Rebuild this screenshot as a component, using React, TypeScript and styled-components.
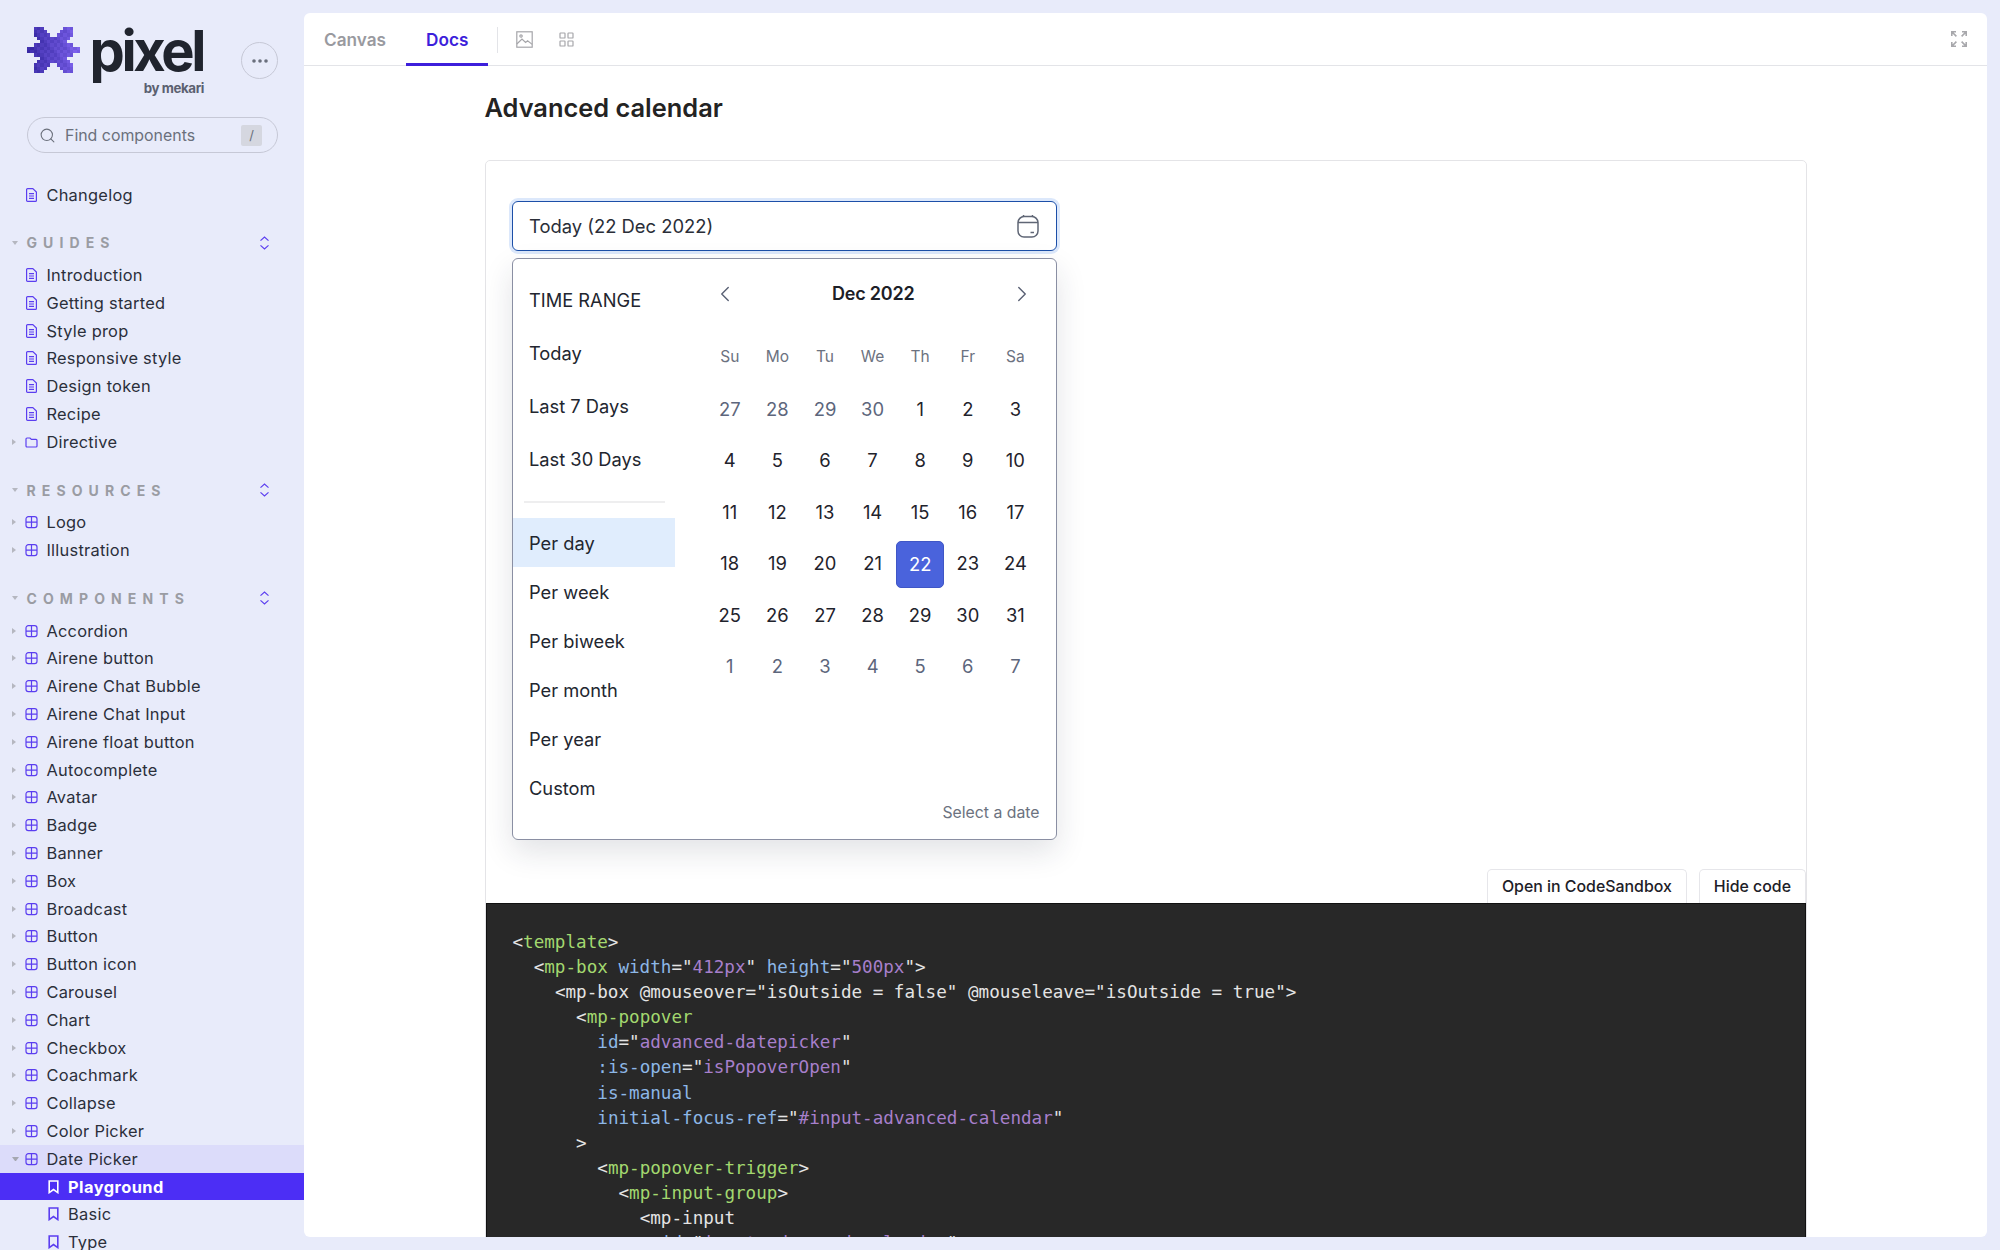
import React from "react";
import styled, { createGlobalStyle } from "styled-components";
import { ChevronLeft, ChevronRight, Search } from "lucide-react";

const GlobalStyle = createGlobalStyle`
  html, body {
    margin: 0;
    padding: 0;
    height: 100%;
    background: #e8ebfa;
    font-family: Inter, "Noto Sans", sans-serif;
    color: #232933;
  }
  * { box-sizing: border-box; }
`;

const Page = styled.div`
  display: flex;
  width: 2000px;
  height: 1250px;
  overflow: hidden;
  background: #e8ebfa;
`;

/* ---------- sidebar ---------- */

const Sidebar = styled.aside`
  width: 304px;
  flex: none;
  height: 1250px;
  overflow: hidden;
`;

const Brand = styled.div`
  display: flex;
  justify-content: space-between;
  height: 117px;
  padding: 26px 26px 0 27px;
`;

const LogoGroup = styled.div`
  display: flex;
  align-items: flex-start;
  gap: 10px;
`;

const Wordmark = styled.div`
  display: flex;
  flex-direction: column;
  align-items: flex-end;
  width: 114px;
`;

const WordmarkName = styled.span`
  font-size: 56px;
  line-height: 50px;
  font-weight: 700;
  letter-spacing: -3.4px;
  margin-right: 1px;
  color: #20242e;
`;

const WordmarkBy = styled.span`
  margin-top: 4px;
  font-size: 13.3px;
  line-height: 16px;
  font-weight: 700;
  letter-spacing: -0.4px;
  color: #5b6070;
`;

const MoreButton = styled.button`
  width: 37px;
  height: 37px;
  margin-top: 16px;
  padding: 0;
  display: flex;
  align-items: center;
  justify-content: center;
  background: transparent;
  border: 1px solid #c6c8d6;
  border-radius: 50%;
  color: #6a6f7d;
`;

const SearchBox = styled.div`
  display: flex;
  align-items: center;
  width: 251px;
  height: 36px;
  margin: 0 0 27.7px 27px;
  padding: 0 15px 0 11px;
  border: 1px solid #c6c8d6;
  border-radius: 18px;
  color: #6b707c;
  font-size: 15.9px;
`;

const SearchLabel = styled.span`
  flex: 1;
  margin-left: 9px;
`;

const SearchKey = styled.span`
  display: flex;
  align-items: center;
  justify-content: center;
  width: 21px;
  height: 21px;
  border-radius: 2px;
  background: #d5d7e0;
  font-size: 13px;
  color: #6b707c;
`;

const TreeRow = styled.div<{ $open?: boolean; $active?: boolean; $sub?: boolean }>`
  display: flex;
  align-items: center;
  height: 27.8px;
  padding-left: ${(p) => (p.$sub ? "48px" : "12px")};
  font-size: 16.4px;
  letter-spacing: ${(p) => (p.$active ? "0.45px" : "0.27px")};
  white-space: nowrap;
  color: ${(p) => (p.$active ? "#fff" : "#2b2f3a")};
  font-weight: ${(p) => (p.$active ? 700 : 400)};
  background: ${(p) => (p.$active ? "#4c2ef5" : p.$open ? "#dcdcfa" : "transparent")};
`;

const Caret = styled.span<{ $open?: boolean; $blank?: boolean }>`
  width: 13.4px;
  flex: none;
  height: 0;
  display: block;
  ${(p) =>
    p.$blank
      ? ""
      : p.$open
      ? `
    margin-right: 6.4px;
    border-left: 3.5px solid transparent;
    border-right: 3.5px solid transparent;
    border-top: 4px solid #a5a7b0;
    border-bottom: 0;
    width: 7px;
  `
      : `
    width: 0;
    margin-right: 9.4px;
    border-top: 3.5px solid transparent;
    border-bottom: 3.5px solid transparent;
    border-left: 4px solid #b5b7c0;
  `}
`;

const RowIcon = styled.svg`
  flex: none;
  width: 13px;
  height: 14px;
  margin-right: 8px;
`;

const SubIcon = styled.svg`
  flex: none;
  width: 11px;
  height: 14px;
  margin-right: 9px;
`;

const SectionTitle = styled.div`
  display: flex;
  align-items: center;
  height: 28px;
  margin: 20.4px 0 4.3px;
  padding: 0 34px 0 12px;
  font-size: 14px;
  font-weight: 700;
  letter-spacing: 6.1px;
  color: #9a9ca3;
`;

const SectionCaret = styled.span`
  width: 0;
  height: 0;
  margin-right: 8.5px;
  border-left: 3.5px solid transparent;
  border-right: 3.5px solid transparent;
  border-top: 4px solid #b5b7c0;
`;

const SectionName = styled.span`
  flex: 1;
`;

/* ---------- main card ---------- */

const Card = styled.main`
  display: flex;
  flex-direction: column;
  width: 1683px;
  height: 1224px;
  margin-top: 13px;
  background: #fff;
  border-radius: 6px;
  overflow: hidden;
`;

const TabBar = styled.header`
  display: flex;
  align-items: stretch;
  flex: none;
  height: 53px;
  border-bottom: 1px solid #e3e4e8;
`;

const Tab = styled.div<{ $active?: boolean }>`
  display: flex;
  align-items: center;
  padding: 3px 20px 0;
  font-size: 17.2px;
  font-weight: 600;
  color: ${(p) => (p.$active ? "#3d1fdb" : "#999a9f")};
  border-bottom: 3px solid ${(p) => (p.$active ? "#3d1fdb" : "transparent")};
  margin-bottom: -1px;
`;

const TabDivider = styled.span`
  width: 1px;
  height: 26px;
  margin: 14px 18px 0 9px;
  background: #e3e4e8;
`;

const TabIcon = styled.span`
  display: flex;
  align-items: center;
  margin-right: 26px;
`;

const TabSpacer = styled.span`
  flex: 1;
`;

const ExpandIcon = styled.span`
  display: flex;
  align-items: center;
  margin-right: 20px;
`;

const Docs = styled.div`
  padding: 26px 180px 0 180.5px;
`;

const Title = styled.h1`
  margin: 0 0 36px;
  font-size: 25.4px;
  line-height: 32px;
  font-weight: 600;
  color: #232323;
`;

const Panel = styled.section`
  border: 1px solid #e4e4e7;
  border-radius: 5px;
`;

const Preview = styled.div`
  height: 708px;
  padding: 40px 0 0 26px;
`;

const DateInput = styled.div`
  display: flex;
  align-items: center;
  justify-content: space-between;
  width: 545px;
  height: 50px;
  padding: 0 17px 0 16.5px;
  background: #fff;
  border: 1.5px solid #1c4fa8;
  border-radius: 6px;
  box-shadow: 0 0 0 3px #dce8fb;
  font-size: 18.4px;
  color: #2a2e38;
`;

const Popover = styled.div`
  display: flex;
  width: 545px;
  height: 582px;
  margin-top: 7px;
  background: #fff;
  border: 1px solid #8a8fa3;
  border-radius: 6px;
  box-shadow: 0 12px 30px rgba(30, 35, 60, 0.13);
`;

const Presets = styled.div`
  flex: none;
  width: 162px;
  padding-top: 14px;
`;

const RangeItem = styled.div`
  display: flex;
  align-items: center;
  height: 53px;
  padding-left: 16.5px;
  font-size: 18.3px;
  color: #22262f;
`;

const PresetDivider = styled.div`
  height: 2px;
  margin: 16px 10px 15px 11px;
  background: #eeeeef;
`;

const PeriodItem = styled.div<{ $active?: boolean }>`
  display: flex;
  align-items: center;
  height: 49px;
  padding-left: 16.5px;
  font-size: 18.3px;
  color: #22262f;
  background: ${(p) => (p.$active ? "#e0edfd" : "transparent")};
`;

const Calendar = styled.div`
  flex: 1;
  display: flex;
  flex-direction: column;
  padding: 15px 16px 16px 31.5px;
`;

const MonthHeader = styled.div`
  display: flex;
  align-items: center;
  justify-content: space-between;
  height: 39px;
  margin-bottom: 1px;
  padding: 0 5px 0 6px;
  color: #596074;
`;

const MonthName = styled.span`
  font-size: 18px;
  font-weight: 600;
  letter-spacing: -0.2px;
  color: #1d2027;
`;

const WeekGrid = styled.div`
  display: grid;
  grid-template-columns: repeat(7, 47.6px);
  height: 30px;
  margin: 27.5px 0 11.5px;
`;

const WeekDay = styled.span`
  display: flex;
  align-items: center;
  justify-content: center;
  font-size: 15.5px;
  color: #6c7280;
`;

const DayGrid = styled.div`
  display: grid;
  grid-template-columns: repeat(7, 47.6px);
  grid-auto-rows: 51.5px;
`;

const Day = styled.span<{ $muted?: boolean; $selected?: boolean }>`
  display: flex;
  align-items: center;
  justify-content: center;
  font-size: 18.4px;
  color: ${(p) => (p.$selected ? "#fff" : p.$muted ? "#5d667c" : "#1f232c")};
  ${(p) =>
    p.$selected
      ? `
    background: #4a63dc;
    border: 1px solid #3f56c6;
    border-radius: 5px;
    height: 47px;
    margin-top: 3px;
  `
      : ""}
`;

const CalendarHint = styled.div`
  margin-top: auto;
  font-size: 15.8px;
  line-height: 20px;
  text-align: right;
  color: #6c7280;
`;

const ActionRow = styled.div`
  display: flex;
  justify-content: flex-end;
  gap: 12px;
  height: 34px;
`;

const ActionButton = styled.button`
  height: 34px;
  padding: 0 14px 1px;
  background: #fff;
  border: 1px solid #e6e6ea;
  border-bottom: 0;
  border-radius: 5px 5px 0 0;
  font-family: Inter, sans-serif;
  font-size: 15.9px;
  font-weight: 500;
  color: #1d2027;
`;

const CodeBlock = styled.pre`
  margin: 0;
  height: 600px;
  padding: 26px;
  background: #282828;
  border: 1px solid #111;
  font-family: "DejaVu Sans Mono", "Liberation Mono", monospace;
  font-size: 17.6px;
  line-height: 25.1px;
  color: #e4e4e4;
`;

const CodeLine = styled.div<{ $indent: number }>`
  height: 25.1px;
  padding-left: ${(p) => p.$indent * 10.6}px;
`;

const tokenColors = { p: "#e4e4e4", t: "#a3d86f", a: "#8db7e6", s: "#a77fcb" };
type TokenKind = keyof typeof tokenColors;

const Token = styled.span<{ $kind: TokenKind }>`
  color: ${(p) => tokenColors[p.$kind]};
`;

/* ---------- drawings ---------- */

const logoMask = [
  "..XXX......XXX..",
  "..XXXX....XXXX..",
  "..XXXXX..XXXXX..",
  "...XXXXXXXXXX...",
  "....XXXXXXXX....",
  "..XXXXXXXXXXXX..",
  "XXXXXXXXXXXXXXXX",
  "XXXXXXXXXXXXXXXX",
  "..XXXXXXXXXXXX..",
  "....XXXXXXXX....",
  "...XXXXXXXXXX...",
  "..XXXXX..XXXXX..",
  "..XXXX....XXXX..",
  "..XXX......XXX..",
];

const logoShade = (x: number, y: number) => {
  const t = (x / 15) * 0.75 + ((x * 7 + y * 13) % 5) * 0.05;
  const r = Math.round(52 + t * 80);
  const g = Math.round(38 + t * 66);
  const b = Math.round(160 + t * 84);
  return `rgb(${r},${g},${b})`;
};

const PixelLogo = () => (
  <svg width="53" height="48" viewBox="0 0 16 14" shapeRendering="crispEdges">
    {logoMask.flatMap((row, y) =>
      row.split("").map((c, x) =>
        c === "X" ? <rect key={`${x}-${y}`} x={x} y={y} width="1" height="1" fill={logoShade(x, y)} /> : null
      )
    )}
  </svg>
);

const DocIcon = () => (
  <RowIcon viewBox="0 0 13 14" fill="none" stroke="#5b3ef0" strokeWidth="1.2">
    <path d="M1.6 1.6a1 1 0 0 1 1-1h5.2l3.6 3.4v8.4a1 1 0 0 1-1 1H2.6a1 1 0 0 1-1-1z" />
    <path d="M4 5.6h5M4 8h5M4 10.4h5" />
  </RowIcon>
);

const BlockIcon = () => (
  <RowIcon viewBox="0 0 13 14" fill="none" stroke="#5b3ef0" strokeWidth="1.2">
    <rect x="1" y="1.6" width="11" height="11" rx="2.4" />
    <path d="M6.5 1.6v11M1 7.1h11" />
  </RowIcon>
);

const FolderIcon = () => (
  <RowIcon viewBox="0 0 13 14" fill="none" stroke="#5b3ef0" strokeWidth="1.2">
    <path d="M1 4a1 1 0 0 1 1-1h3l1.4 1.4H11a1 1 0 0 1 1 1V11a1 1 0 0 1-1 1H2a1 1 0 0 1-1-1z" />
  </RowIcon>
);

const BookmarkIcon = ({ color }: { color: string }) => (
  <SubIcon viewBox="0 0 11 14" fill="none" stroke={color} strokeWidth="1.6">
    <path d="M1.2 1h8.6v11.6L5.5 9.6l-4.3 3z" />
  </SubIcon>
);

const UpDownIcon = () => (
  <svg width="11" height="14" viewBox="0 0 11 14" fill="none" stroke="#5b3ef0" strokeWidth="1.2">
    <path d="M1.5 4.6 5.5 1l4 3.6M1.5 9.4l4 3.6 4-3.6" />
  </svg>
);

const CalendarGlyph = () => (
  <svg width="22" height="24" viewBox="0 0 22 24" fill="none" stroke="#5f6675" strokeWidth="1.5">
    <rect x="1" y="2.6" width="20" height="20.4" rx="6" />
    <path d="M6.5 1v1.6M15.5 1v1.6M1 8.6h20M13.5 18.6h3.5" />
  </svg>
);

const ImageGlyph = () => (
  <svg width="17" height="17" viewBox="0 0 17 17" fill="none" stroke="#a6a6aa" strokeWidth="1.2">
    <rect x="0.8" y="0.8" width="15.4" height="15.4" />
    <circle cx="5" cy="5" r="1.2" />
    <path d="M0.8 13 6 8l3.6 3.4 2-1.6 4.6 3.6" />
  </svg>
);

const GridGlyph = () => (
  <svg width="15" height="15" viewBox="0 0 15 15" fill="none" stroke="#a6a6aa" strokeWidth="1.2">
    <rect x="1" y="1" width="5" height="5" rx="0.6" />
    <rect x="9" y="1" width="5" height="5" rx="0.6" />
    <rect x="1" y="9" width="5" height="5" rx="0.6" />
    <rect x="9" y="9" width="5" height="5" rx="0.6" />
  </svg>
);

const ExpandGlyph = () => (
  <svg width="16" height="16" viewBox="0 0 16 16" fill="none" stroke="#a8a8ac" strokeWidth="1.6">
    <path d="M0.8 5V0.8H5M0.8 0.8l4.6 4.6M15.2 5V0.8H11M15.2 0.8l-4.6 4.6M0.8 11v4.2H5M0.8 15.2l4.6-4.6M15.2 11v4.2H11M15.2 15.2l-4.6-4.6" />
  </svg>
);

/* ---------- data ---------- */

const guides = ["Introduction", "Getting started", "Style prop", "Responsive style", "Design token", "Recipe"];
const components = [
  "Accordion",
  "Airene button",
  "Airene Chat Bubble",
  "Airene Chat Input",
  "Airene float button",
  "Autocomplete",
  "Avatar",
  "Badge",
  "Banner",
  "Box",
  "Broadcast",
  "Button",
  "Button icon",
  "Carousel",
  "Chart",
  "Checkbox",
  "Coachmark",
  "Collapse",
  "Color Picker",
];

const weekDays = ["Su", "Mo", "Tu", "We", "Th", "Fr", "Sa"];
const leading = [27, 28, 29, 30];
const trailing = [1, 2, 3, 4, 5, 6, 7];
const december = Array.from({ length: 31 }, (_, i) => i + 1);

const codeLines: [number, [TokenKind, string][]][] = [
  [0, [["p", "<"], ["t", "template"], ["p", ">"]]],
  [2, [["p", "<"], ["t", "mp-box"], ["p", " "], ["a", "width"], ["p", '="'], ["s", "412px"], ["p", '" '], ["a", "height"], ["p", '="'], ["s", "500px"], ["p", '">']]],
  [4, [["p", '<mp-box @mouseover="isOutside = false" @mouseleave="isOutside = true">']]],
  [6, [["p", "<"], ["t", "mp-popover"]]],
  [8, [["a", "id"], ["p", '="'], ["s", "advanced-datepicker"], ["p", '"']]],
  [8, [["a", ":is-open"], ["p", '="'], ["s", "isPopoverOpen"], ["p", '"']]],
  [8, [["a", "is-manual"]]],
  [8, [["a", "initial-focus-ref"], ["p", '="'], ["s", "#input-advanced-calendar"], ["p", '"']]],
  [6, [["p", ">"]]],
  [8, [["p", "<"], ["t", "mp-popover-trigger"], ["p", ">"]]],
  [10, [["p", "<"], ["t", "mp-input-group"], ["p", ">"]]],
  [12, [["p", "<mp-input"]]],
  [14, [["a", "id"], ["p", '="'], ["s", "input-advanced-calendar"], ["p", '"']]],
];

const App: React.FC = () => {
  return (
    <>
      <GlobalStyle />
      <Page>
        <Sidebar>
          <Brand>
            <LogoGroup>
              <PixelLogo />
              <Wordmark>
                <WordmarkName>pixel</WordmarkName>
                <WordmarkBy>by mekari</WordmarkBy>
              </Wordmark>
            </LogoGroup>
            <MoreButton aria-label="More">
              <svg width="16" height="4" viewBox="0 0 16 4" fill="#6a6f7d">
                <circle cx="2" cy="2" r="1.8" />
                <circle cx="8" cy="2" r="1.8" />
                <circle cx="14" cy="2" r="1.8" />
              </svg>
            </MoreButton>
          </Brand>

          <SearchBox>
            <Search size={17} strokeWidth={1.5} />
            <SearchLabel>Find components</SearchLabel>
            <SearchKey>/</SearchKey>
          </SearchBox>

          <TreeRow>
            <Caret $blank />
            <DocIcon />
            Changelog
          </TreeRow>

          <SectionTitle>
            <SectionCaret />
            <SectionName>GUIDES</SectionName>
            <UpDownIcon />
          </SectionTitle>
          {guides.map((name) => (
            <TreeRow key={name}>
              <Caret $blank />
              <DocIcon />
              {name}
            </TreeRow>
          ))}
          <TreeRow>
            <Caret />
            <FolderIcon />
            Directive
          </TreeRow>

          <SectionTitle>
            <SectionCaret />
            <SectionName>RESOURCES</SectionName>
            <UpDownIcon />
          </SectionTitle>
          {["Logo", "Illustration"].map((name) => (
            <TreeRow key={name}>
              <Caret />
              <BlockIcon />
              {name}
            </TreeRow>
          ))}

          <SectionTitle>
            <SectionCaret />
            <SectionName>COMPONENTS</SectionName>
            <UpDownIcon />
          </SectionTitle>
          {components.map((name) => (
            <TreeRow key={name}>
              <Caret />
              <BlockIcon />
              {name}
            </TreeRow>
          ))}
          <TreeRow $open>
            <Caret $open />
            <BlockIcon />
            Date Picker
          </TreeRow>
          <TreeRow $sub $active>
            <BookmarkIcon color="#fff" />
            Playground
          </TreeRow>
          <TreeRow $sub>
            <BookmarkIcon color="#5b3ef0" />
            Basic
          </TreeRow>
          <TreeRow $sub>
            <BookmarkIcon color="#5b3ef0" />
            Type
          </TreeRow>
        </Sidebar>

        <Card>
          <TabBar>
            <Tab>Canvas</Tab>
            <Tab $active>Docs</Tab>
            <TabDivider />
            <TabIcon>
              <ImageGlyph />
            </TabIcon>
            <TabIcon>
              <GridGlyph />
            </TabIcon>
            <TabSpacer />
            <ExpandIcon>
              <ExpandGlyph />
            </ExpandIcon>
          </TabBar>

          <Docs>
            <Title>Advanced calendar</Title>
            <Panel>
              <Preview>
                <DateInput>
                  Today (22 Dec 2022)
                  <CalendarGlyph />
                </DateInput>
                <Popover>
                  <Presets>
                    {["TIME RANGE", "Today", "Last 7 Days", "Last 30 Days"].map((label) => (
                      <RangeItem key={label}>{label}</RangeItem>
                    ))}
                    <PresetDivider />
                    {["Per day", "Per week", "Per biweek", "Per month", "Per year", "Custom"].map((label) => (
                      <PeriodItem key={label} $active={label === "Per day"}>
                        {label}
                      </PeriodItem>
                    ))}
                  </Presets>
                  <Calendar>
                    <MonthHeader>
                      <ChevronLeft size={26} strokeWidth={1.3} />
                      <MonthName>Dec 2022</MonthName>
                      <ChevronRight size={26} strokeWidth={1.3} />
                    </MonthHeader>
                    <WeekGrid>
                      {weekDays.map((d) => (
                        <WeekDay key={d}>{d}</WeekDay>
                      ))}
                    </WeekGrid>
                    <DayGrid>
                      {leading.map((d) => (
                        <Day key={`prev-${d}`} $muted>
                          {d}
                        </Day>
                      ))}
                      {december.map((d) => (
                        <Day key={d} $selected={d === 22}>
                          {d}
                        </Day>
                      ))}
                      {trailing.map((d) => (
                        <Day key={`next-${d}`} $muted>
                          {d}
                        </Day>
                      ))}
                    </DayGrid>
                    <CalendarHint>Select a date</CalendarHint>
                  </Calendar>
                </Popover>
              </Preview>
              <ActionRow>
                <ActionButton>Open in CodeSandbox</ActionButton>
                <ActionButton>Hide code</ActionButton>
              </ActionRow>
              <CodeBlock>
                {codeLines.map(([indent, tokens], i) => (
                  <CodeLine key={i} $indent={indent}>
                    {tokens.map(([kind, text], j) => (
                      <Token key={j} $kind={kind}>
                        {text}
                      </Token>
                    ))}
                  </CodeLine>
                ))}
              </CodeBlock>
            </Panel>
          </Docs>
        </Card>
      </Page>
    </>
  );
};

export default App;
